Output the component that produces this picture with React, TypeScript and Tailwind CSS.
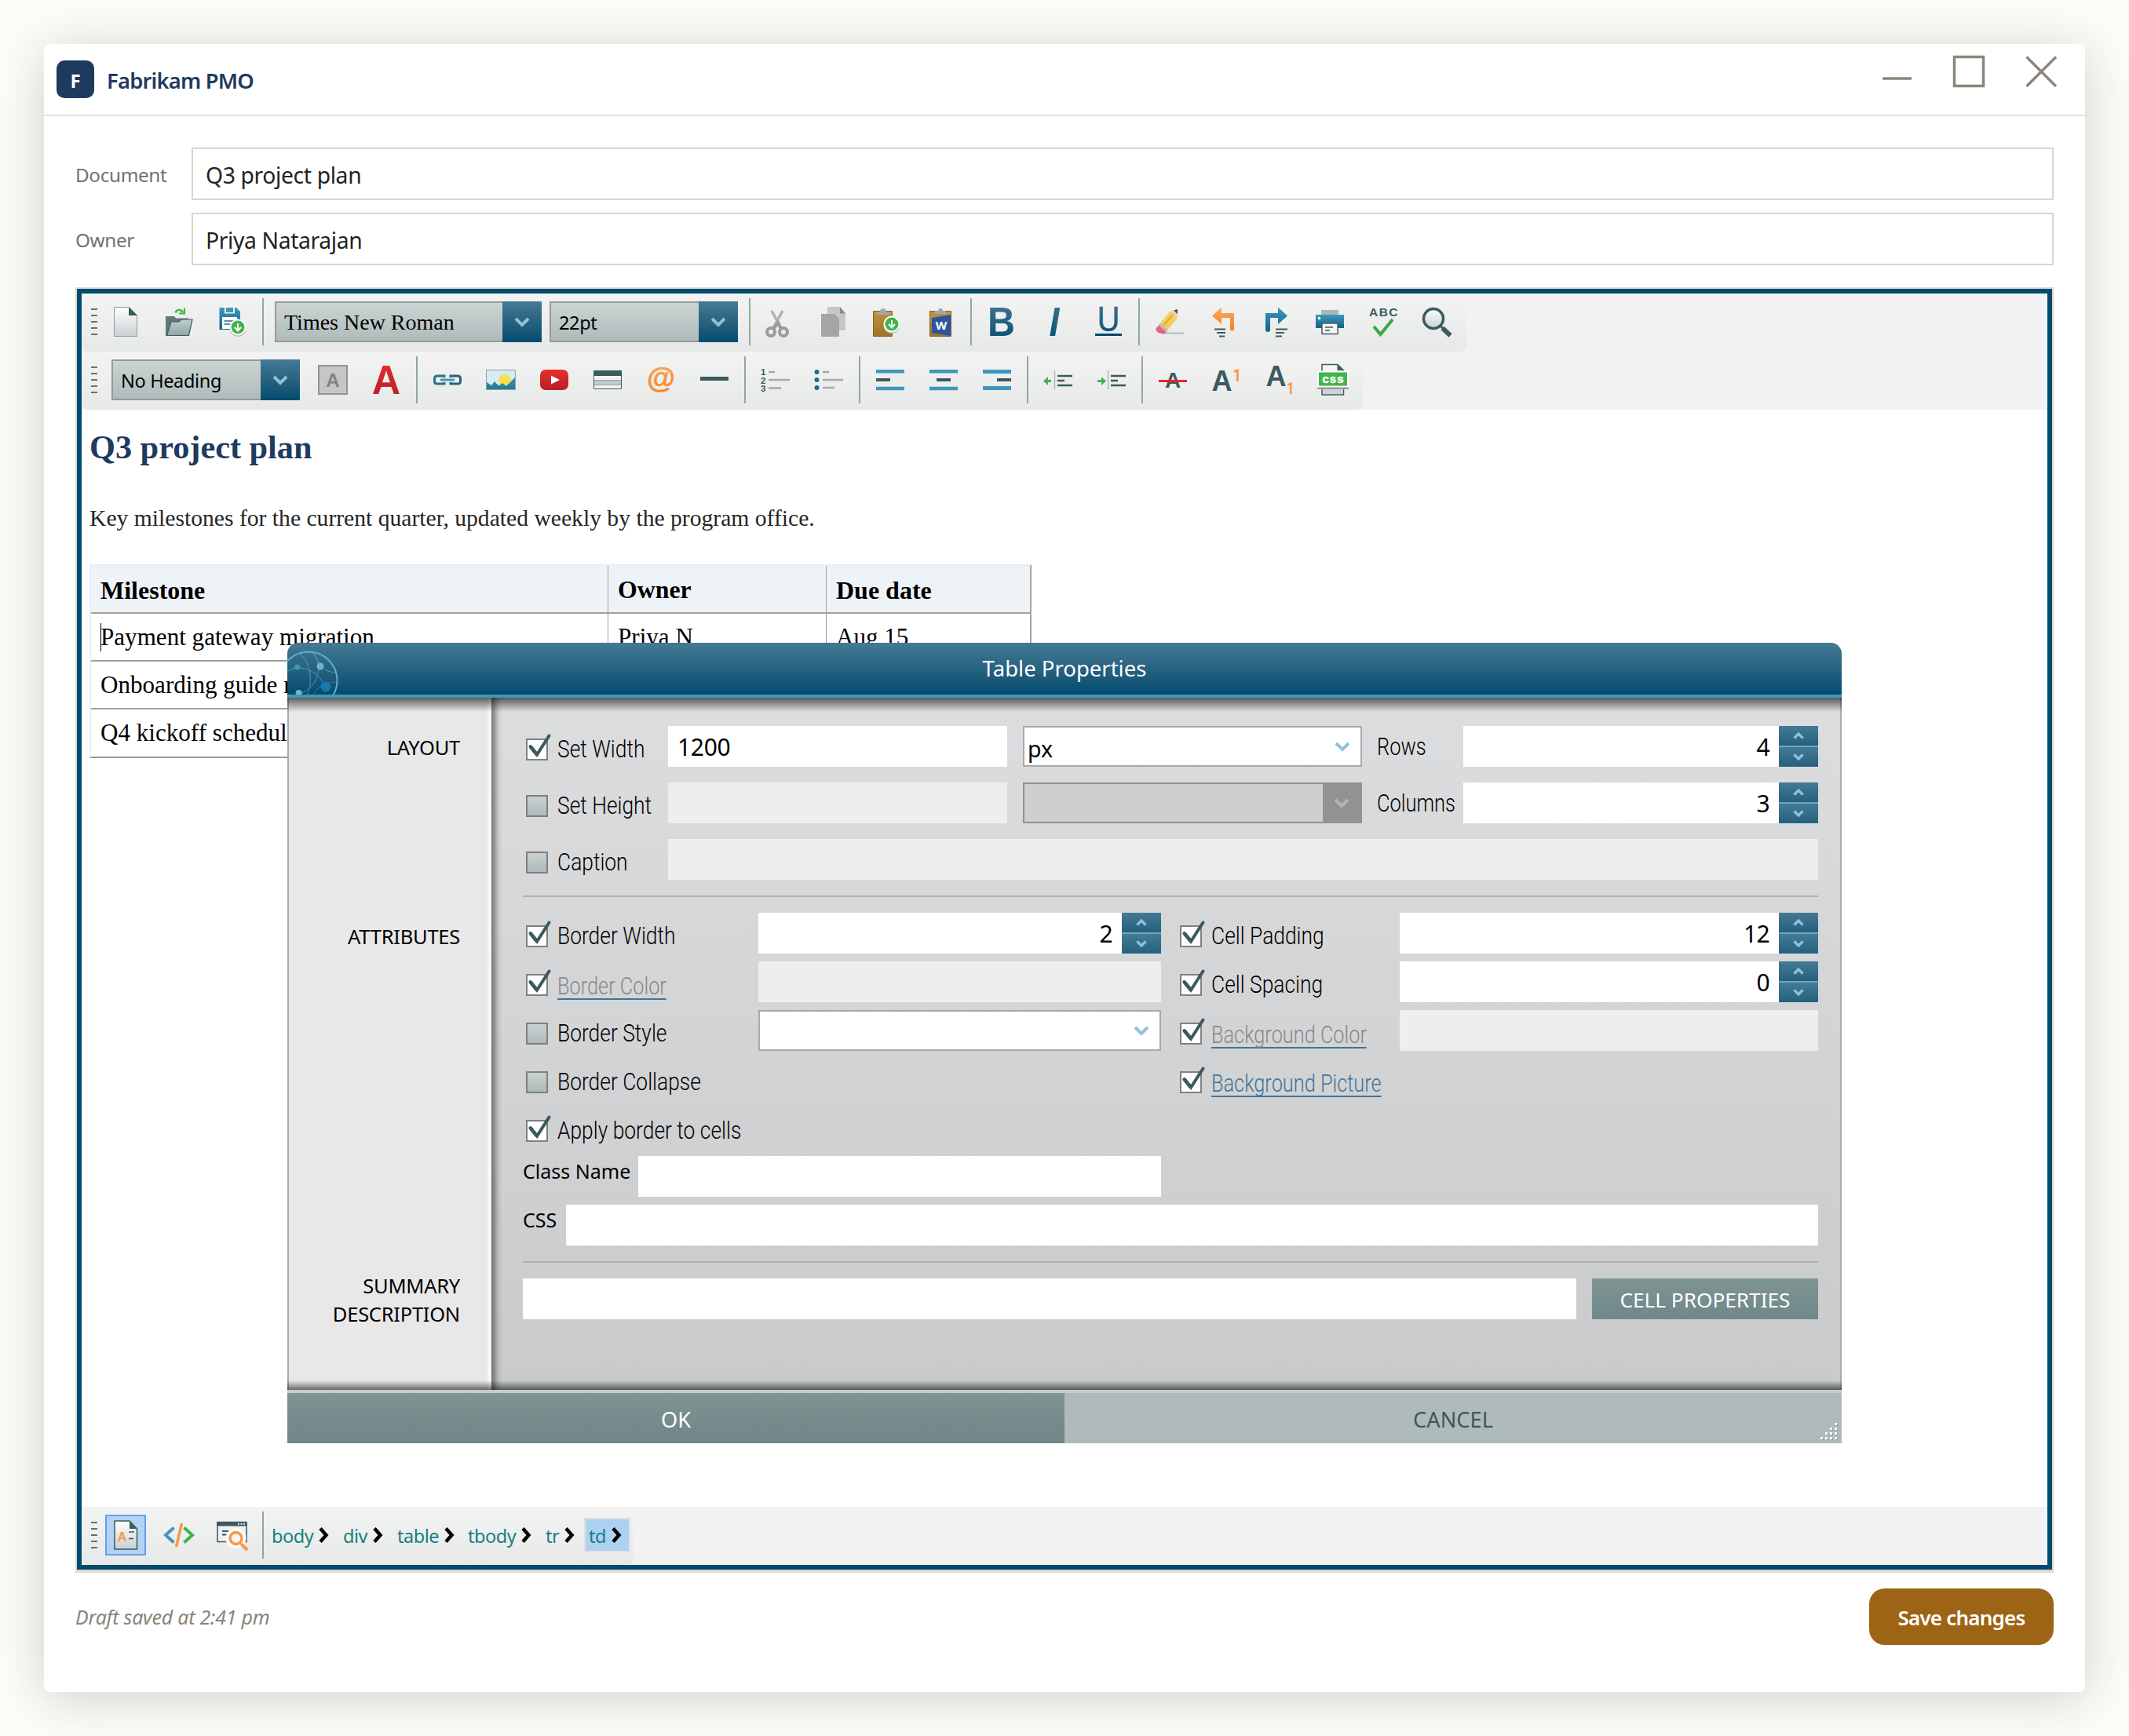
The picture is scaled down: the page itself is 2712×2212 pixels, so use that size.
import { useState } from "react"
import type { ReactNode } from "react"
import clsx from "clsx"

const DARK = "#3c5a5c"
const ORANGE = "#fb9843"
const BLUE = "#3f98bb"
const GREEN = "#41b549"

function Defs() {
  return (
    <svg width="0" height="0" className="absolute">
      <defs>
        <linearGradient id="gBlue" x1="0" y1="0" x2="0" y2="1">
          <stop offset="0" stopColor="#447a94" />
          <stop offset="1" stopColor="#004b6e" />
        </linearGradient>
        <linearGradient id="gSky" x1="0" y1="0" x2="0" y2="1">
          <stop offset="0" stopColor="#3f98bb" />
          <stop offset="1" stopColor="#0f6389" />
        </linearGradient>
        <linearGradient id="gPaper" x1="0" y1="0" x2="0" y2="1">
          <stop offset="0" stopColor="#ffffff" />
          <stop offset="1" stopColor="#c8d1d2" />
        </linearGradient>
        <linearGradient id="gRed" x1="0" y1="0" x2="0" y2="1">
          <stop offset="0" stopColor="#ea2d2b" />
          <stop offset="1" stopColor="#b61f28" />
        </linearGradient>
        <linearGradient id="gBoard" x1="0" y1="0" x2="0" y2="1">
          <stop offset="0" stopColor="#bd9440" />
          <stop offset="1" stopColor="#9f7228" />
        </linearGradient>
        <linearGradient id="gFolder" x1="0" y1="0" x2="0" y2="1">
          <stop offset="0" stopColor="#c3cecd" />
          <stop offset="1" stopColor="#8fa6a5" />
        </linearGradient>
        <linearGradient id="gOrange" x1="0" y1="0" x2="0" y2="1">
          <stop offset="0" stopColor="#fba95f" />
          <stop offset="1" stopColor="#f5811f" />
        </linearGradient>
      </defs>
    </svg>
  )
}

function ToolButton({ children, active }: { children: ReactNode; active?: boolean }) {
  return (
    <button className="flex h-15 w-17 shrink-0 items-center justify-center">
      <span
        className={clsx(
          "flex h-[52px] w-[52px] items-center justify-center",
          active && "border-2 border-[#64a2e4] bg-[#b2d3f3]",
        )}
      >
        <svg width="40" height="40" viewBox="0 0 40 40" fill="none" className="shrink-0 overflow-visible">
          {children}
        </svg>
      </span>
    </button>
  )
}

function Separator() {
  return <div className="mx-1 h-15 w-0.5 shrink-0 bg-[#8fa9a1]" />
}

function Gripper() {
  return (
    <div className="ml-3 mr-0.5 flex h-[34px] w-2 shrink-0 flex-col justify-between">
      {[0, 1, 2, 3, 4].map((i) => (
        <span key={i} className="h-0.5 w-2 bg-[#6d6d6d]" />
      ))}
    </div>
  )
}

function Chevron({ color = "#8ec3d6", up = false, small = false }) {
  return (
    <svg
      width={small ? 14 : 20}
      height={small ? 9 : 13}
      viewBox="0 0 20 13"
      fill="none"
      className={up ? "rotate-180" : undefined}
    >
      <path d="M2 2L10 10L18 2" stroke={color} strokeWidth={small ? 5 : 4} />
    </svg>
  )
}

interface ToolSelectProps {
  value: string
  className: string
  textClassName: string
}

function ToolSelect({ value, className, textClassName }: ToolSelectProps) {
  return (
    <div
      className={clsx(
        "flex h-[52px] shrink-0 border-2 border-r-0 border-[#999999] bg-linear-to-b from-[#cbd4d3] to-[#afbcbb]",
        className,
      )}
    >
      <span className={clsx("flex-1 whitespace-nowrap pl-2.5 text-black", textClassName)}>{value}</span>
      <span className="-my-0.5 flex w-[50px] items-center justify-center bg-linear-to-b from-[#447a94] to-[#004b6e]">
        <Chevron />
      </span>
    </div>
  )
}

function GreenArrow({ cx, cy }: { cx: number; cy: number }) {
  return (
    <g>
      <circle cx={cx} cy={cy + 1.5} r="10.5" fill="#b5b5b5" />
      <circle cx={cx} cy={cy} r="10.5" fill="#fff" />
      <circle cx={cx} cy={cy} r="8.5" fill={GREEN} />
      <path
        d={`M${cx} ${cy - 5}V${cy + 4}M${cx - 4} ${cy}L${cx} ${cy + 4.5}L${cx + 4} ${cy}`}
        stroke="#fff"
        strokeWidth="2"
      />
    </g>
  )
}

function FirstToolbar() {
  return (
    <div className="flex h-[74px] w-[1764px] items-center rounded-b-lg bg-linear-to-b from-[#f3f3f3] to-[#e7e9e9] pb-0.5">
      <Gripper />
      <ToolButton>
        <path d="M5.5 1.5H24L34.5 12V38.5H5.5Z" fill="url(#gPaper)" stroke="#8a9fa0" />
        <path d="M24 1V12H35Z" fill={DARK} />
      </ToolButton>
      <ToolButton>
        <path d="M3 13H14L16 15.5H32V20L27 38H3Z" fill="#5c7b79" />
        <path d="M10 20H20L22.5 17H37L32.5 37.5H4.500Z" fill="url(#gFolder)" stroke={DARK} strokeWidth="1.2" />
        <path d="M15.5 8.5C17 4 22 3.500 25 8" stroke={GREEN} strokeWidth="2.5" />
        <path d="M27 2.5V9.500H20" stroke={GREEN} strokeWidth="2.2" />
      </ToolButton>
      <ToolButton>
        <path d="M3.5 2H25L30 7V30H3.5Z" fill="url(#gSky)" />
        <path d="M10 2H23V9.5H10Z" fill="#e6eff2" />
        <path d="M12 2H21V8H12Z" fill={BLUE} />
        <path d="M7 14H26V29H7Z" fill="#fff" />
        <path d="M9.5 19H22M9.5 23H19" stroke="#2e6a80" strokeWidth="1.5" />
        <GreenArrow cx={27} cy={27} />
      </ToolButton>
      <Separator />
      <ToolSelect
        value="Times New Roman"
        className="ml-2.5 w-[340px]"
        textClassName="font-['Liberation_Serif',serif] text-[28px] leading-[49px]"
      />
      <ToolSelect value="22pt" className="mx-2.5 w-[240px]" textClassName="text-[23.5px] leading-[50px] tracking-[-0.015em]" />
      <Separator />
      <ToolButton>
        <path d="M9 6L21 28M23 6L11 28" stroke="#b3b1b1" strokeWidth="3.5" />
        <circle cx="8" cy="33" r="5" stroke="#9b9999" strokeWidth="4" />
        <circle cx="24" cy="33" r="5" stroke="#9b9999" strokeWidth="4" />
        <path d="M20 28L17 21L12 28" stroke="#9b9999" strokeWidth="4" />
      </ToolButton>
      <ToolButton>
        <path d="M12 1H28L35 9V31H12Z" fill="#c6c6c6" />
        <path d="M28 1V9.5H35Z" fill="#8a8a8a" />
        <path d="M4 10H21L27 16V39H4Z" fill="#a8a4a4" />
      </ToolButton>
      <ToolButton>
        <path d="M2.5 6.5H26.5V38.5H2.5Z" fill="url(#gBoard)" stroke="#8a6220" />
        <path d="M7 11V7H11C11 1.5 19 1.5 19 7H23V11Z" fill="#a3a7ab" />
        <GreenArrow cx={26} cy={23} />
      </ToolButton>
      <ToolButton>
        <path d="M6.5 6.5H33.5V38.5H6.5Z" fill="url(#gBoard)" stroke="#8a6220" />
        <path d="M13 10V6H17C17 1.5 23 1.5 23 6H27V10Z" fill="#a3a7ab" />
        <path d="M9 15L33 11V38L9 34Z" fill="#2a569f" />
        <text x="21" y="30" textAnchor="middle" fontSize="15" fontWeight="700" fill="#fff" fontFamily="Noto Sans">W</text>
      </ToolButton>
      <Separator />
      <ToolButton>
        <text x="20" y="38" textAnchor="middle" fontSize="51" fontWeight="700" fill="url(#gBlue)" fontFamily="Liberation Sans" transform="translate(.6 0) scale(.95 1)">B</text>
      </ToolButton>
      <ToolButton>
        <text x="20" y="38" textAnchor="middle" fontSize="52" fontWeight="700" fontStyle="italic" fill="url(#gBlue)" fontFamily="Liberation Sans" transform="translate(1 0) scale(.9 1)">I</text>
      </ToolButton>
      <ToolButton>
        <text x="20" y="32" textAnchor="middle" fontSize="44" fill="url(#gBlue)" stroke="#23607f" strokeWidth="0.5" fontFamily="Liberation Sans" transform="translate(2 0) scale(.9 1)">U</text>
        <path d="M3 36.5H37" stroke="#004b6e" strokeWidth="3" />
      </ToolButton>
      <Separator />
      <ToolButton>
        <path d="M10 34.5H38" stroke="#b9b9b9" strokeWidth="2" />
        <path d="M8 22L20 7L30 15L17 31Z" fill="#f5cf5e" />
        <path d="M12 25L24.5 10" stroke="#e0a93a" strokeWidth="2" />
        <path d="M20 7L30 4V15Z" fill="#e8d3b0" />
        <path d="M25 5.5L30 4V10Z" fill="#4b4b4b" />
        <path d="M8 22L17 31L14 34.5C10 37 1 33 2.5 28.5Z" fill="#e8637f" />
        <path d="M8 22L17 31L15.5 33L6 24.5Z" fill="#b9bcc0" />
      </ToolButton>
      <ToolButton>
        <path d="M6 12.5L18 1.5V9H34V29A2.5 2.5 0 0 1 29 29V15H18V23Z" fill="url(#gOrange)" />
        <path d="M9 29.5H23M12 34H23M15 38.5H22" stroke={DARK} strokeWidth="1.8" />
      </ToolButton>
      <ToolButton>
        <path d="M34 12.5L22 1.5V9H6V30A2.5 2.5 0 0 0 12 30V15H22V23Z" fill="url(#gSky)" />
        <path d="M19 29.5H34M19 34H30M19 38.5H27" stroke={DARK} strokeWidth="1.8" />
      </ToolButton>
      <ToolButton>
        <path d="M9 5H31V11H9Z" fill="#a9b6b7" />
        <path d="M2 11H38V28H2Z" fill="url(#gSky)" />
        <circle cx="6.5" cy="15.5" r="1.8" fill="#fff" />
        <path d="M10 22H30V35.5H10Z" fill="#f4f6f6" stroke="#4a5f66" strokeWidth="1.5" />
        <path d="M14 27H24M14 31H20" stroke={DARK} strokeWidth="1.6" />
      </ToolButton>
      <ToolButton>
        <text x="21" y="13" textAnchor="middle" fontSize="15.5" fontWeight="700" letterSpacing="1.4" fill={DARK} fontFamily="Liberation Sans">ABC</text>
        <path d="M8 26L16.5 36L32 17" stroke="#3aa744" strokeWidth="4" />
      </ToolButton>
      <ToolButton>
        <circle cx="16" cy="16" r="12.5" fill="url(#gPaper)" stroke={DARK} strokeWidth="3.5" />
        <path d="M24.5 25L28 28.5" stroke={DARK} strokeWidth="3" />
        <path d="M27.5 28L37.5 37.5" stroke={DARK} strokeWidth="6" />
      </ToolButton>
    </div>
  )
}

function SecondToolbar() {
  return (
    <div className="flex h-[74px] w-[1632px] items-center rounded-b-lg bg-linear-to-b from-[#f3f3f3] to-[#e7e9e9] pb-0.5">
      <Gripper />
      <ToolSelect value="No Heading" className="ml-4 mr-2 w-[240px]" textClassName="text-[23.5px] leading-[50px] tracking-[-0.015em]" />
      <ToolButton>
        <path d="M2 2H38V38H2Z" fill="#c6c6c6" stroke="#949494" strokeWidth="2" />
        <text x="20" y="28.5" textAnchor="middle" fontSize="24" fontWeight="700" fill="#828282" fontFamily="Liberation Sans">A</text>
      </ToolButton>
      <ToolButton>
        <text x="20" y="38" textAnchor="middle" fontSize="52" fontWeight="700" fill="url(#gRed)" fontFamily="Liberation Sans" transform="translate(.6 0) scale(.97 1)">A</text>
      </ToolButton>
      <Separator />
      <ToolButton>
        <path d="M16 17V15H7Q3.5 15 3.5 18V22Q3.5 25 7 25H16V23" stroke="#2f7189" strokeWidth="3" />
        <path d="M24 17V15H33Q36.5 15 36.5 18V22Q36.5 25 33 25H24V23" stroke="#2f6177" strokeWidth="3" />
        <path d="M11 20H29" stroke={BLUE} strokeWidth="3" />
      </ToolButton>
      <ToolButton>
        <path d="M1.5 7.5H38.5V32.5H1.5Z" fill="#d3edf1" stroke="#8aa5a8" />
        <circle cx="25" cy="21" r="8" fill="#fbe04d" />
        <path d="M2 23L8 27L12 22L17 28L22 24L27 28L38 17V32H2Z" fill="#2f86a3" />
        <path d="M2 27L9 29L15 25L22 30L29 26L38 29V32H2Z" fill="#1f6f8e" opacity=".5" />
      </ToolButton>
      <ToolButton>
        <rect x="2" y="7" width="36" height="26" rx="7" fill="url(#gRed)" />
        <path d="M16 14.5L27 20L16 25.5Z" fill="#fff" />
      </ToolButton>
      <ToolButton>
        <path d="M2.5 8.5H37.5V31.5H2.5Z" fill="#f1f3f3" stroke={DARK} />
        <path d="M2 8H38V15H2Z" fill={DARK} />
        <path d="M3 21H37V27H3Z" fill="#c1caca" />
        <path d="M3 20.5H37M3 26.5H37" stroke="#98a5a5" />
      </ToolButton>
      <ToolButton>
        <text x="20" y="29.5" textAnchor="middle" fontSize="37" fontWeight="700" fill="url(#gOrange)" stroke={ORANGE} strokeWidth=".6" fontFamily="Liberation Sans">@</text>
      </ToolButton>
      <ToolButton>
        <path d="M2 16H38V21H2Z" fill={DARK} />
      </ToolButton>
      <Separator />
      <ToolButton>
        <g fontSize="11.5" fontWeight="700" fill={DARK} fontFamily="Liberation Sans">
          <text x="1" y="14">1</text>
          <text x="1" y="24.5">2</text>
          <text x="1" y="34.5">3</text>
        </g>
        <path d="M11 10H19M11 20H38M11 30.5H27" stroke="#a9a7ae" strokeWidth="2.5" />
      </ToolButton>
      <ToolButton>
        <circle cx="4.5" cy="10" r="3" fill="#1f6b8b" />
        <circle cx="4.5" cy="20" r="3" fill="#1f6b8b" />
        <circle cx="4.5" cy="30" r="3" fill="#1f6b8b" />
        <path d="M12 10H20M12 20H38M12 30H27" stroke="#a9a7ae" strokeWidth="2.5" />
      </ToolButton>
      <Separator />
      <ToolButton>
        <path d="M2 9.2H38M2 31H38" stroke={BLUE} strokeWidth="4.4" />
        <path d="M2 20H20" stroke={DARK} strokeWidth="4" />
      </ToolButton>
      <ToolButton>
        <path d="M2 9.2H38M2 31H38" stroke={BLUE} strokeWidth="4.4" />
        <path d="M11 20H29" stroke={DARK} strokeWidth="4" />
      </ToolButton>
      <ToolButton>
        <path d="M2 9.5H38M2 30.5H38" stroke={BLUE} strokeWidth="5" />
        <path d="M20 20H38" stroke={DARK} strokeWidth="4" />
      </ToolButton>
      <Separator />
      <ToolButton>
        <path d="M1 21.5L7 16V20H11V23H7V27Z" fill={GREEN} />
        <path d="M15.5 8V32" stroke="#b3b8b8" strokeWidth="1.5" />
        <path d="M19 15H38M19 21H28M19 27H38" stroke={DARK} strokeWidth="2.5" />
      </ToolButton>
      <ToolButton>
        <path d="M13 21.5L7 16V20H2V23H7V27Z" fill={GREEN} />
        <path d="M15.5 8V32" stroke="#b3b8b8" strokeWidth="1.5" />
        <path d="M19 15H38M19 21H28M19 27H38" stroke={DARK} strokeWidth="2.5" />
      </ToolButton>
      <Separator />
      <ToolButton>
        <text x="20" y="30" textAnchor="middle" fontSize="28" fontWeight="700" fill={DARK} fontFamily="Liberation Sans">A</text>
        <path d="M2 21.5H38" stroke="#f02323" strokeWidth="3" />
      </ToolButton>
      <ToolButton>
        <text x="14.5" y="33.5" textAnchor="middle" fontSize="36" fontWeight="700" fill={DARK} fontFamily="Liberation Sans">A</text>
        <text x="34" y="22" textAnchor="middle" fontSize="22" fontWeight="700" fill={ORANGE} fontFamily="Roboto" transform="translate(4 0) scale(.88 1)">1</text>
      </ToolButton>
      <ToolButton>
        <text x="15.5" y="27.5" textAnchor="middle" fontSize="36" fontWeight="700" fill={DARK} fontFamily="Liberation Sans">A</text>
        <text x="34" y="38" textAnchor="middle" fontSize="20" fontWeight="700" fill={ORANGE} fontFamily="Roboto" transform="translate(4 0) scale(.88 1)">1</text>
      </ToolButton>
      <ToolButton>
        <path d="M6 .5H26L33.5 8V39H6Z" fill="#f4f6f6" stroke={DARK} strokeWidth="1.5" />
        <path d="M25.5 .5V8H34Z" fill={DARK} />
        <path d="M7 30H33V38H7Z" fill="#ccd3d3" />
        <path d="M0 10H40V32H0Z" fill="#9c9c9c" />
        <path d="M0 8.5H40V29.5H0Z" fill="#fff" />
        <path d="M2 10.5H38V27.5H2Z" fill={GREEN} />
        <text x="20.5" y="23.5" textAnchor="middle" fontSize="15" fontWeight="700" letterSpacing="1" fill="#fff" stroke="#fff" strokeWidth=".5" fontFamily="Liberation Sans">css</text>
      </ToolButton>
    </div>
  )
}

const rows = [
  ["Payment gateway migration", "Priya N", "Aug 15"],
  ["Onboarding guide r", "", ""],
  ["Q4 kickoff schedule", "", ""],
]

function DocumentContent() {
  return (
    <div className="pl-2.5 pt-5 font-['Liberation_Serif',serif]">
      <h1 className="h-[60px] text-[42.3px] font-bold leading-[56px] text-[#1e3a5f]">Q3 project plan</h1>
      <p className="mt-10 text-[29.63px] leading-[36px] text-[#262626]">
        Key milestones for the current quarter, updated weekly by the program office.
      </p>
      <div className="mt-[41px] w-[1200px] border-2 border-l-[#ededed] border-t-[#ededed] border-b-[#989898] border-r-[#a6a6a6] text-[31.1px] text-black">
        <div className="grid h-[61px] grid-cols-[658px_278px_1fr] border-b-2 border-[#a0a0a0] bg-[#eef3f8] font-bold leading-[62px]">
          <span className="pl-3 text-[32px]">Milestone</span>
          <span className="border-l border-[#a0a0a0] pl-3 text-[31.8px]">Owner</span>
          <span className="border-l border-[#a0a0a0] pl-3 text-[32px]">Due date</span>
        </div>
        {rows.map((row, i) => (
          <div
            key={row[0]}
            className={clsx(
              "grid grid-cols-[658px_278px_1fr] leading-[60px]",
              i < rows.length - 1 ? "h-[61px] border-b-2 border-[#a0a0a0]" : "h-15",
            )}
          >
            <span className="flex items-center pl-3">
              {i === 0 && <span className="-mr-px h-9 w-px bg-black" />}
              {row[0]}
            </span>
            <span className="border-l border-[#a0a0a0] pl-3">{row[1]}</span>
            <span className="border-l border-[#a0a0a0] pl-3">{row[2]}</span>
          </div>
        ))}
      </div>
    </div>
  )
}

interface CheckFieldProps {
  label: string
  defaultChecked?: boolean
  link?: "disabled" | "active"
  className?: string
}

function CheckField({ label, defaultChecked = false, link, className }: CheckFieldProps) {
  const [checked, setChecked] = useState(defaultChecked)

  return (
    <div className={clsx("flex h-[60px] shrink-0 items-center self-start", className)}>
      <button
        onClick={() => setChecked(!checked)}
        className={clsx(
          "h-7 w-7 shrink-0 border-2 border-[#808080]",
          checked ? "bg-white" : "bg-linear-to-b from-[#c8d1d0] to-[#aebbba]",
        )}
      >
        {checked && (
          <svg width="24" height="24" viewBox="2 2 24 24" fill="none" className="overflow-visible">
            <path d="M5.5 10L14 20.5L29.5 -3.5" stroke={DARK} strokeWidth="4" strokeLinecap="round" />
            <path d="M5.5 10L14 20.5" stroke={DARK} strokeWidth="4.5" />
          </svg>
        )}
      </button>
      <span
        className={clsx(
          "ml-3 inline-block origin-left whitespace-nowrap font-['Roboto',sans-serif] text-[30.5px] font-[350]",
          !link && "scale-x-[.865] leading-[34px] text-black",
          link && "mt-1.5 scale-x-[.83] border-b-2 border-[#3f759b] leading-[30px]",
          link === "disabled" && "text-[#888888]",
          link === "active" && "text-[#3f759b]",
        )}
      >
        {label}
      </span>
    </div>
  )
}

function TextBox({ value, className }: { value?: string; className?: string }) {
  return (
    <div className={clsx("h-[52px] bg-white text-[30px] leading-[54px] tracking-[-0.01em] text-black", className)}>{value}</div>
  )
}

function DisabledBox({ className }: { className?: string }) {
  return <div className={clsx("h-[52px] bg-[#edeeee]", className)} />
}

function NumberBox({ initial, className }: { initial: number; className?: string }) {
  const [value, setValue] = useState(initial)

  return (
    <div className={clsx("flex h-[52px] bg-white", className)}>
      <span className="flex-1 pr-3 text-right text-[30px] leading-[53px] tracking-[-0.02em] text-black">{value}</span>
      <span className="flex w-[50px] flex-col gap-0.5 bg-[#6aa7c0]">
        <button
          onClick={() => setValue(value + 1)}
          className="flex flex-1 items-center justify-center bg-linear-to-b from-[#447a94] to-[#24617f]"
        >
          <Chevron up small />
        </button>
        <button
          onClick={() => setValue(Math.max(0, value - 1))}
          className="flex flex-1 items-center justify-center bg-linear-to-b from-[#447a94] to-[#24617f]"
        >
          <Chevron small />
        </button>
      </span>
    </div>
  )
}

function SelectBox({ value, className }: { value?: string; className?: string }) {
  return (
    <div className={clsx("flex h-[52px] items-center justify-between border-2 border-[#a7a9b0] bg-white pl-1", className)}>
      <span className="pt-1.5 text-[28.5px] leading-[40px] text-black">{value}</span>
      <span className="flex w-[46px] justify-center">
        <Chevron />
      </span>
    </div>
  )
}

function PlainLabel({ children, className }: { children: string; className?: string }) {
  return (
    <span className={clsx("shrink-0", className)}>
      <span className="inline-block origin-left scale-x-[.835] font-['Roboto',sans-serif] text-[30.5px] font-[350] leading-[53px] text-black">
        {children}
      </span>
    </span>
  )
}

function TableDialog() {
  return (
    <div className="absolute left-[262px] top-[297px] flex h-[1020px] w-[1980px] flex-col">
      <div className="relative flex h-[70px] justify-center overflow-hidden rounded-t-[14px] border-b-4 border-[#3f98bb] bg-linear-to-b from-[#447a94] to-[#004b6e]">
        <svg width="70" height="70" viewBox="0 0 70 70" fill="none" className="absolute left-0 top-0">
          <circle cx="27" cy="48" r="36.5" stroke="#5fb0c7" strokeWidth="2" />
          <g stroke="#5fb0c7" strokeWidth="1" opacity=".75">
            <path d="M16 14C32 26 32 55 24 70" />
            <path d="M32 12C46 26 42 56 14 66" />
            <path d="M0 36C18 26 40 36 48 56" />
            <path d="M31 11C40 22 42 36 60 38" />
            <path d="M62 50C46 50 34 60 32 70" stroke="#2f92c0" />
          </g>
          <circle cx="12.7" cy="31" r="3.5" fill={BLUE} />
          <circle cx="42" cy="30" r="4.5" fill="#6bb8cd" />
          <circle cx="49" cy="56" r="6.5" fill="#1779ae" />
          <circle cx="14.6" cy="64" r="4" fill="#6bb8cd" />
        </svg>
        <span className="text-[27.5px] leading-[65px] text-white">Table Properties</span>
      </div>

      <div className="relative flex h-[882px]">
        <div className="flex w-[260px] flex-col border-l-2 border-r-[5px] border-l-[#a7a9ac] border-r-[#f6f6f6] bg-[#e8e8e8] pr-[35px] text-right text-[25.5px] leading-9 tracking-[-0.01em] text-black">
          <span className="mt-[45px]">LAYOUT</span>
          <span className="mt-[205px]">ATTRIBUTES</span>
          <span className="mt-[409px]">SUMMARY</span>
          <span>DESCRIPTION</span>
        </div>

        <div className="flex flex-1 flex-col gap-5 border-r-2 border-[#a7a9ac] bg-linear-to-b from-[#dcdddf] to-[#c9cacc] pl-10 pr-7 pt-9 shadow-[inset_12px_0_8px_-7px_rgba(0,0,0,0.5)]">
          <div className="flex">
            <CheckField label="Set Width" defaultChecked className="w-[185px] pl-1" />
            <TextBox value="1200" className="w-[432px] pl-3" />
            <SelectBox value="px" className="ml-5 w-[432px]" />
            <PlainLabel className="w-[129px] pl-[19px]">Rows</PlainLabel>
            <NumberBox initial={4} className="flex-1" />
          </div>
          <div className="-mt-2 flex">
            <CheckField label="Set Height" className="w-[185px] pl-1" />
            <DisabledBox className="w-[432px]" />
            <div className="ml-5 flex h-[52px] w-[432px] justify-end border-2 border-[#929292] bg-[#cfcfcf]">
              <span className="flex w-12 items-center justify-center bg-[#929292]">
                <Chevron color="#b5b5b5" />
              </span>
            </div>
            <PlainLabel className="w-[129px] pl-[19px]">Columns</PlainLabel>
            <NumberBox initial={3} className="flex-1" />
          </div>
          <div className="-mt-2 flex">
            <CheckField label="Caption" className="w-[185px] pl-1" />
            <DisabledBox className="flex-1" />
          </div>

          <hr className="-mt-2 border-t-2 border-[#afb1b3]" />

          <div className="grid grid-cols-2 gap-x-6">
            <div>
              <div className="flex h-[62px]">
                <CheckField label="Border Width" defaultChecked className="w-[300px] pl-1" />
                <NumberBox initial={2} className="flex-1" />
              </div>
              <div className="flex h-[62px]">
                <CheckField label="Border Color" defaultChecked link="disabled" className="w-[300px] pl-1" />
                <DisabledBox className="flex-1" />
              </div>
              <div className="flex h-[62px]">
                <CheckField label="Border Style" className="w-[300px] pl-1" />
                <SelectBox className="flex-1" />
              </div>
              <div className="flex h-[62px]">
                <CheckField label="Border Collapse" className="pl-1" />
              </div>
              <div className="flex h-[62px]">
                <CheckField label="Apply border to cells" defaultChecked className="pl-1" />
              </div>
              <div className="flex h-[62px]">
                <span className="w-[147px] text-[25px] leading-[38px] text-black">Class Name</span>
                <TextBox className="flex-1" />
              </div>
            </div>
            <div>
              <div className="flex h-[62px]">
                <CheckField label="Cell Padding" defaultChecked className="w-[280px]" />
                <NumberBox initial={12} className="flex-1" />
              </div>
              <div className="flex h-[62px]">
                <CheckField label="Cell Spacing" defaultChecked className="w-[280px]" />
                <NumberBox initial={0} className="flex-1" />
              </div>
              <div className="flex h-[62px]">
                <CheckField label="Background Color" defaultChecked link="disabled" className="w-[280px]" />
                <DisabledBox className="flex-1" />
              </div>
              <div className="flex h-[62px]">
                <CheckField label="Background Picture" defaultChecked link="active" />
              </div>
            </div>
            <div className="col-span-2 flex">
              <span className="w-[55px] text-[25px] leading-[38px] text-black">CSS</span>
              <TextBox className="flex-1" />
            </div>
          </div>

          <hr className="border-t-2 border-[#afb1b3]" />

          <div className="flex gap-5">
            <TextBox className="flex-1" />
            <button className="h-[52px] w-[288px] bg-linear-to-b from-[#7f9593] to-[#70878a] text-[26.2px] leading-[54px] text-white">
              CELL PROPERTIES
            </button>
          </div>
        </div>

        <div className="absolute inset-x-0 top-0 h-[18px] bg-linear-to-b from-black/60 to-transparent" />
        <div className="absolute inset-x-0 bottom-0 h-3 bg-linear-to-t from-black/55 to-transparent" />
      </div>

      <div className="relative flex h-[68px] border-t-4 border-[#c3cdcb] text-[27.2px] leading-[67px]">
        <button className="w-1/2 bg-linear-to-b from-[#7f9593] to-[#6f8587] text-white">OK</button>
        <button className="w-1/2 bg-[#afbbba] text-[#3c5a5a]">CANCEL</button>
        <svg width="24" height="24" viewBox="0 0 24 24" className="absolute bottom-0.5 right-1">
          {[0, 1, 2, 3].map((r) =>
            Array.from({ length: r + 1 }, (_, c) => (
              <g key={`${r}-${c}`}>
                <rect x={19 - c * 6 + 1} y={r * 6 + 1} width="3" height="3" fill="#8d9caa" />
                <rect x={19 - c * 6} y={r * 6} width="3" height="3" fill="#fff" />
              </g>
            )),
          )}
        </svg>
      </div>
    </div>
  )
}

const crumbs = [
  { tag: "body", className: "w-[91px]" },
  { tag: "div", className: "w-[69px]" },
  { tag: "table", className: "w-[90px]" },
  { tag: "tbody", className: "w-[99px]" },
  { tag: "tr", className: "w-[51px]" },
  { tag: "td", className: "w-[59px] border-2 border-[#dde1e6] bg-[#aed1f1]" },
]

function StatusBar() {
  return (
    <div className="h-[74px] bg-[#f2f2f2]">
      <div className="flex h-full w-[703px] items-center rounded-b-lg bg-linear-to-b from-[#f3f3f3] to-[#e7e9e9] pb-0.5">
        <Gripper />
        <ToolButton active>
          <path d="M6 2H25L34.5 12V38H6Z" fill="url(#gPaper)" stroke={DARK} strokeWidth="1.5" />
          <path d="M25 1.5V12H35Z" fill={DARK} />
          <text x="15.5" y="28" textAnchor="middle" fontSize="16.5" fontWeight="700" fill={ORANGE} fontFamily="Liberation Sans">A</text>
          <path d="M24 16H31M24 24.5H30" stroke={DARK} strokeWidth="1.6" />
        </ToolButton>
        <ToolButton>
          <path d="M13.5 10.5L3 20L13.5 29.5" stroke={BLUE} strokeWidth="4" />
          <path d="M23.5 5L16.5 35" stroke={ORANGE} strokeWidth="3.5" />
          <path d="M26.5 10.5L37 20L26.5 29.5" stroke={GREEN} strokeWidth="4" />
        </ToolButton>
        <ToolButton>
          <path d="M1 3.5H38V28.5H1Z" fill="#eef1f2" stroke={DARK} strokeWidth="1.5" />
          <path d="M0 3H38.5V8.5H0Z" fill={DARK} />
          <path d="M27 5.7H36" stroke="#dfe6e6" strokeWidth="2" strokeDasharray="2 1.5" />
          <path d="M7 15H16M7 19.5H13" stroke={DARK} strokeWidth="1.8" />
          <circle cx="24.5" cy="24" r="13" fill="#fff" />
          <circle cx="24.5" cy="24" r="7.5" fill="#f6f6f6" stroke={ORANGE} strokeWidth="3.5" />
          <path d="M31 31L39 39" stroke={ORANGE} strokeWidth="4" />
        </ToolButton>
        <Separator />
        <div className="ml-1 flex items-center">
          {crumbs.map((crumb) => (
            <span
              key={crumb.tag}
              className={clsx(
                "flex h-11 items-center gap-[6px] whitespace-nowrap text-[23.5px] tracking-[-0.02em] text-[#158080]",
                crumb.tag === "td" ? "pl-1" : "pl-0.5",
                crumb.className,
              )}
            >
              <span className="pt-1">{crumb.tag}</span>
              <svg width="14" height="20" viewBox="0 0 14 20" fill="none">
                <path d="M3 1.5L10.5 10L3 18.5" stroke="#000" strokeWidth="4.5" />
              </svg>
            </span>
          ))}
        </div>
      </div>
    </div>
  )
}

function Field({ label, value }: { label: string; value: string }) {
  return (
    <div className="flex h-[67px] items-center">
      <span className="w-[148px] pt-1 text-[24.3px] tracking-[-0.015em] text-[#75706a]">{label}</span>
      <div className="flex h-full flex-1 items-center border-2 border-[#d9d5ca] bg-white pl-4 pt-[3px] text-[28.3px] tracking-[-0.013em] text-[#222222]">
        {value}
      </div>
    </div>
  )
}

export default function App() {
  return (
    <div className="h-[2212px] w-[2712px] bg-[#fcfdf8] p-14 font-['Noto_Sans',sans-serif]">
      <Defs />
      <div className="flex h-[2100px] w-[2600px] flex-col rounded-lg bg-white shadow-[0_8px_64px_rgba(30,30,20,0.2)]">
        <header className="flex h-[92px] shrink-0 items-center border-b-2 border-[#e8e4dc] pl-4 pr-2.5">
          <div className="flex h-12 w-12 items-center justify-center rounded-[10px] bg-[#1f3a5f] text-2xl font-bold text-white">
            <span className="pt-1">F</span>
          </div>
          <span className="ml-4 pt-1 text-[27.3px] font-semibold tracking-[-0.028em] text-[#1f3a5f]">Fabrikam PMO</span>
          <div className="-mt-[21px] ml-auto flex">
            <svg width="92" height="48" viewBox="0 0 92 48" fill="none" stroke="#8c867d" strokeWidth="3.5">
              <path d="M28 33H65" />
            </svg>
            <svg width="92" height="48" viewBox="0 0 92 48" fill="none" stroke="#8c867d" strokeWidth="3.5">
              <path d="M27.5 5.5H64.5V42.5H27.5Z" />
            </svg>
            <svg width="92" height="48" viewBox="0 0 92 48" fill="none" stroke="#8c867d" strokeWidth="3.5">
              <path d="M27.5 5.5L65 43M65 5.5L27.5 43" />
            </svg>
          </div>
        </header>

        <main className="flex flex-col px-10 pt-10">
          <div className="flex flex-col gap-4">
            <Field label="Document" value="Q3 project plan" />
            <Field label="Owner" value="Priya Natarajan" />
          </div>

          <div className="mt-7 h-[1638px] border-2 border-b-4 border-[#dedad1]">
            <div className="flex h-[1632px] flex-col border-6 border-[#004b6e]">
              <div className="h-[148px] shrink-0 bg-[#f2f2f2]">
                <FirstToolbar />
                <SecondToolbar />
              </div>
              <div className="relative h-[1398px] shrink-0 bg-white">
                <DocumentContent />
                <TableDialog />
              </div>
              <StatusBar />
            </div>
          </div>

          <footer className="mt-5 flex h-[72px] items-center justify-between">
            <span className="pt-0.5 text-[25px] italic tracking-[-0.01em] text-[#8a847a]">Draft saved at 2:41 pm</span>
            <button className="h-full w-[235px] rounded-[20px] bg-[#9d6415] pt-0.5 text-[26px] font-semibold tracking-[-0.03em] text-white">
              Save changes
            </button>
          </footer>
        </main>
      </div>
    </div>
  )
}
